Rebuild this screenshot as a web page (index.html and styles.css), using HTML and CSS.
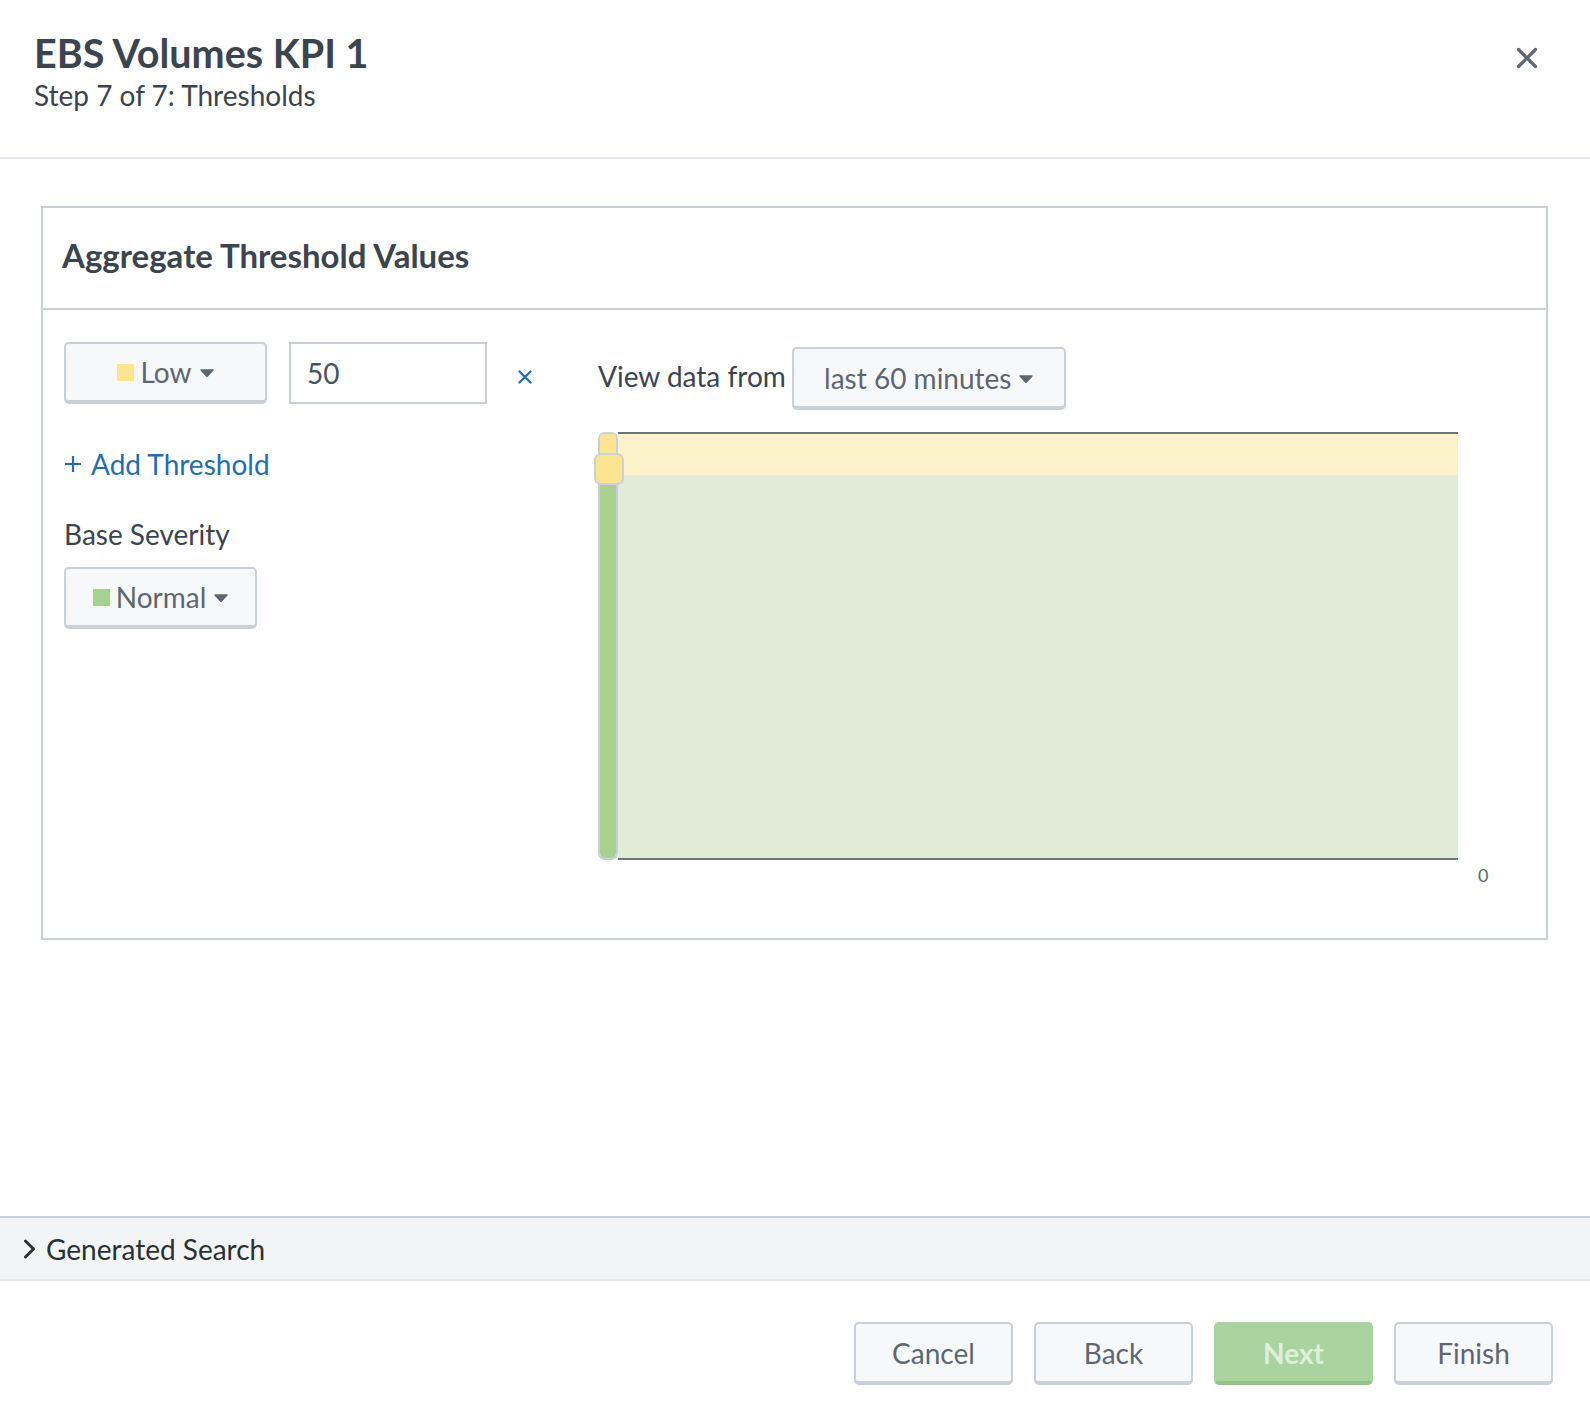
FILE: index.html
```html
<!DOCTYPE html>
<html>
<head>
<meta charset="utf-8">
<title>EBS Volumes KPI 1</title>
<link rel="stylesheet" href="styles.css">
</head>
<body>
<div class="modal">
  <header class="modal-header">
    <div class="titles">
      <h1 class="title">EBS Volumes KPI 1</h1>
      <div class="subtitle">Step 7 of 7: Thresholds</div>
    </div>
    <button class="close" aria-label="Close">
      <svg width="22" height="22" viewBox="0 0 22 22"><path d="M2.5 2.5 L19.5 19.5 M19.5 2.5 L2.5 19.5" stroke="#5c6773" stroke-width="3.2" stroke-linecap="round"/></svg>
    </button>
  </header>

  <main class="modal-body">
    <section class="panel">
      <div class="panel-header">
        <h2 class="panel-title">Aggregate Threshold Values</h2>
      </div>
      <div class="panel-body">
        <div class="left-col">
          <div class="threshold-row">
            <button class="btn sev-btn low-btn"><span class="swatch swatch-low"></span><span>Low</span><svg class="caret" width="14" height="8" viewBox="0 0 14 8"><path d="M1 1 H13 L7 7.5 Z" fill="#5c6773" stroke="#5c6773" stroke-width="1.4" stroke-linejoin="round"/></svg></button>
            <div class="value-input">50</div>
            <span class="remove"><svg width="14" height="14" viewBox="0 0 14 14"><path d="M1.5 1.5 L12.5 12.5 M12.5 1.5 L1.5 12.5" stroke="#2a6db2" stroke-width="2.4" stroke-linecap="round"/></svg></span>
          </div>
          <div class="add-link"><svg class="plus" width="18" height="18" viewBox="0 0 18 18"><path d="M9 1 V17 M1 9 H17" stroke="#1f6db2" stroke-width="2.2"/></svg><span>Add Threshold</span></div>
          <div class="field-label">Base Severity</div>
          <button class="btn sev-btn normal-btn"><span class="swatch swatch-normal"></span><span>Normal</span><svg class="caret" width="14" height="8" viewBox="0 0 14 8"><path d="M1 1 H13 L7 7.5 Z" fill="#5c6773" stroke="#5c6773" stroke-width="1.4" stroke-linejoin="round"/></svg></button>
        </div>
        <div class="right-col">
          <div class="view-row">
            <span class="view-label">View data from</span>
            <button class="btn range-btn"><span>last 60 minutes</span><svg class="caret" width="14" height="8" viewBox="0 0 14 8"><path d="M1 1 H13 L7 7.5 Z" fill="#5c6773" stroke="#5c6773" stroke-width="1.4" stroke-linejoin="round"/></svg></button>
          </div>
          <div class="chart">
            <div class="track">
              <div class="track-low"></div>
              <div class="track-normal"></div>
              <div class="handle"></div>
            </div>
            <div class="plot">
              <div class="band band-low"></div>
              <div class="band band-normal"></div>
            </div>
            <div class="axis-spacer"></div>
            <div class="axis-label">0</div>
          </div>
        </div>
      </div>
    </section>
  </main>

  <div class="generated">
    <svg class="chevron" width="13" height="20" viewBox="0 0 13 20"><path d="M2.5 2 L10.5 10 L2.5 18" fill="none" stroke="#2b3033" stroke-width="3" stroke-linecap="round" stroke-linejoin="round"/></svg>
    <span>Generated Search</span>
  </div>

  <footer class="modal-footer">
    <button class="btn footer-btn">Cancel</button>
    <button class="btn footer-btn">Back</button>
    <button class="btn footer-btn primary" disabled>Next</button>
    <button class="btn footer-btn">Finish</button>
  </footer>
</div>
</body>
</html>
```

FILE: styles.css
```css
* { box-sizing: border-box; }

html, body {
  margin: 0;
  padding: 0;
  background: #ffffff;
}

body {
  font-family: Lato, "Liberation Sans", sans-serif;
  color: #3c444d;
}

.modal {
  width: 1590px;
  height: 1420px;
  display: flex;
  flex-direction: column;
}

/* Header */
.modal-header {
  height: 159px;
  flex-shrink: 0;
  border-bottom: 2px solid #e1e6ea;
  display: flex;
  justify-content: space-between;
  align-items: flex-start;
  padding: 29px 52px 0 34px;
}

.title {
  margin: 0;
  font-size: 39.5px;
  line-height: 48px;
  font-weight: 700;
  color: #3c444d;
}

.subtitle {
  margin-top: 2px;
  font-size: 28px;
  line-height: 32px;
  color: #3c444d;
}

.close {
  margin-top: 18px;
  padding: 0;
  border: 0;
  background: none;
  width: 22px;
  height: 22px;
  display: block;
}
.close svg { display: block; }

/* Body */
.modal-body {
  flex: 1;
  padding: 47px 42px 0 41px;
}

.panel {
  border: 2px solid #c9d0d8;
}

.panel-header {
  height: 102px;
  border-bottom: 2px solid #c9d0d8;
  padding: 28px 0 0 19px;
}

.panel-title {
  margin: 0;
  font-size: 33px;
  line-height: 38px;
  font-weight: 700;
  color: #3c444d;
}

.panel-body {
  display: flex;
  padding: 32px 0 52px 21px;
}

.left-col {
  width: 534px;
  flex-shrink: 0;
}

.threshold-row {
  display: flex;
  align-items: center;
}

.btn {
  font-family: inherit;
  background: #f7f8fa;
  border: 2px solid #c9d0d8;
  border-bottom-width: 4px;
  border-radius: 5px;
  color: #5c6773;
  font-size: 28px;
  padding: 0;
  display: inline-flex;
  align-items: center;
  justify-content: center;
}

.sev-btn {
  height: 62px;
  color: #5c6773;
}

.low-btn { width: 203px; }
.normal-btn { width: 193px; }

.swatch {
  width: 17px;
  height: 17px;
  margin-right: 6px;
  display: inline-block;
}
.swatch-low { background: #fce58e; }
.swatch-normal { background: #a6d28f; }

.caret { margin-left: 8px; margin-top: 2px; }

.value-input {
  width: 198px;
  height: 62px;
  margin-left: 22px;
  border: 2px solid #c9d0d8;
  font-size: 28px;
  line-height: 58px;
  padding-left: 16px;
  color: #4a525b;
}

.remove {
  margin-left: 31px;
  margin-top: 8px;
  display: flex;
}

.add-link {
  margin-top: 44px;
  display: flex;
  align-items: center;
  font-size: 28px;
  line-height: 32px;
  color: #1f6db2;
}
.plus { margin-right: 9px; }

.field-label {
  margin-top: 38px;
  font-size: 28px;
  line-height: 32px;
  color: #3c444d;
}

.normal-btn { margin-top: 17px; }

.right-col {
  padding-top: 5px;
}

.view-row {
  display: flex;
  align-items: center;
}

.view-label {
  font-size: 28px;
  line-height: 32px;
  margin-right: 6px;
  margin-bottom: 5px;
  color: #3c444d;
}

.range-btn {
  width: 274px;
  height: 63px;
}

/* Chart */
.chart {
  margin-top: 22px;
  display: grid;
  grid-template-columns: 20px 840px 46px;
  grid-template-rows: 428px auto;
}

.track {
  position: relative;
  border: 2px solid #c9d0d8;
  border-radius: 7px;
  display: flex;
  flex-direction: column;
}
.track-low {
  height: 22px;
  background: #fce58e;
  border-radius: 5px 5px 0 0;
}
.track-normal {
  flex: 1;
  background: #a6d18e;
  border-radius: 0 0 5px 5px;
}

.handle {
  position: absolute;
  left: -6px;
  top: 19px;
  width: 30px;
  height: 32px;
  border: 2px solid #c9d0d8;
  border-radius: 7px;
  background: #fce58e;
}

.plot {
  border-top: 2px solid #6b7580;
  border-bottom: 2px solid #6b7580;
  display: flex;
  flex-direction: column;
}
.band-low {
  height: 41px;
  background: #fbf2c9;
}
.band-normal {
  flex: 1;
  background: #e0ecd7;
}

.axis-spacer { grid-column: 1 / 3; }

.axis-label {
  grid-column: 3;
  padding-left: 20px;
  margin-top: 4px;
  font-size: 18px;
  line-height: 22px;
  color: #5c6773;
}

/* Generated search */
.generated {
  height: 65px;
  flex-shrink: 0;
  background: #f2f4f5;
  border-top: 2px solid #c9d0d8;
  border-bottom: 2px solid #e1e6ea;
  display: flex;
  align-items: center;
  padding-left: 23px;
  font-size: 28px;
  color: #2b3033;
}
.chevron { margin-right: 10px; }

/* Footer */
.modal-footer {
  height: 139px;
  flex-shrink: 0;
  display: flex;
  justify-content: flex-end;
  align-items: flex-start;
  gap: 21px;
  padding: 41px 37px 0 0;
}

.footer-btn {
  width: 159px;
  height: 63px;
}

.footer-btn.primary {
  background: #a9d4a0;
  border-color: #a9d4a0;
  border-bottom-color: #93c287;
  color: #dff0da;
  font-weight: 700;
}
```
